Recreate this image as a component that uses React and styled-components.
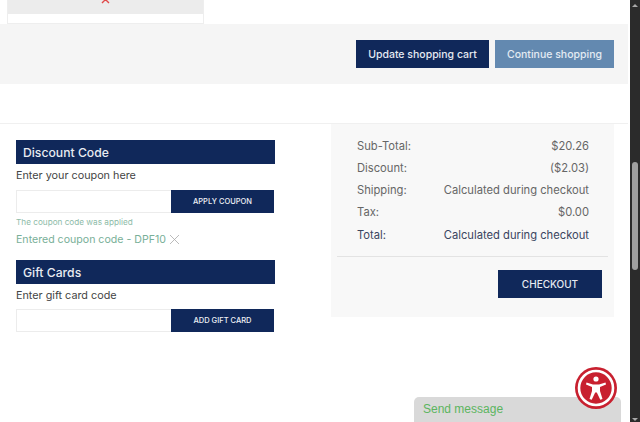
import React from 'react';
import styled, { createGlobalStyle } from 'styled-components';

const Global = createGlobalStyle`
  html, body { margin: 0; padding: 0; height: 422px; overflow: hidden; background: #fff; }
  * { box-sizing: border-box; }
  body { font-family: Inter, "Liberation Sans", sans-serif; }
`;
const navy = '#10285a';

const Page = styled.div`
  position: relative;
  display: flex;
  width: 640px;
  height: 422px;
  overflow: hidden;
`;
const Main = styled.main`
  width: 628px;
  display: flex;
  flex-direction: column;
`;
const TableStub = styled.div`
  width: 197px;
  height: 24px;
  margin-left: 7px;
  border: 1px solid #eeeeee;
  border-top: 0;
  background: #fff;
`;
const RemoveCell = styled.div`
  height: 14px;
  background: #ececec;
  display: flex;
  justify-content: center;
  align-items: flex-start;
  overflow: hidden;
`;
const CartBand = styled.div`
  height: 60px;
  background: #f5f5f5;
  display: flex;
  justify-content: flex-end;
  align-items: center;
  gap: 6px;
  padding-right: 14px;
`;
const BandButton = styled.button`
  height: 28px;
  width: ${p => p.$w}px;
  border: 0;
  padding: 0;
  background: ${p => p.$bg};
  color: ${p => p.$fg};
  font: 500 10.5px Inter, sans-serif;
`;
const Gap = styled.div`
  height: 40px;
  border-bottom: 1px solid #f0f0f0;
`;
const Columns = styled.div`
  display: flex;
  align-items: flex-start;
`;
const Left = styled.div`
  width: 331px;
  padding: 16.4px 0 0 16px;
  display: flex;
  flex-direction: column;
`;
const Heading = styled.h2`
  width: 259px;
  height: 24px;
  margin: 0;
  padding-left: 7px;
  background: ${navy};
  color: #e9ecf2;
  font: 500 12.2px/25px Inter, sans-serif;
`;
const Hint = styled.p`
  margin: 0;
  height: 25.6px;
  font: 400 10.8px/23px Inter, sans-serif;
  color: #444444;
`;
const InputRow = styled.div`
  display: flex;
  width: 258px;
  height: 23px;
`;
const CodeInput = styled.input`
  width: 155px;
  height: 23px;
  border: 1px solid #ececec;
  border-right: 0;
  background: #fff;
  outline: none;
`;
const RowButton = styled.button`
  width: 103px;
  height: 23px;
  border: 0;
  padding: 0;
  background: ${navy};
  color: #eef0f5;
  font: 500 7.5px Inter, sans-serif;
`;
const Applied = styled.div`
  margin-top: 4px;
  height: 11px;
  font: 400 8.2px/11px Inter, sans-serif;
  color: #8dbba8;
`;
const Entered = styled.div`
  margin-top: 4px;
  height: 15px;
  margin-bottom: 12.8px;
  display: flex;
  align-items: center;
  gap: 3px;
  font: 400 10.6px/15px Inter, sans-serif;
  color: #79af98;
`;
const Panel = styled.aside`
  width: 283px;
  height: 193px;
  background: #f8f8f8;
  padding: 10.5px 6px 0;
  display: flex;
  flex-direction: column;
`;
const Rows = styled.div`
  display: flex;
  flex-direction: column;
  padding: 0 19px 0 20px;
  height: 121.5px;
`;
const Row = styled.div`
  display: flex;
  justify-content: space-between;
  height: 22.3px;
  font: 400 11.2px/22px Inter, sans-serif;
  color: ${p => (p.$total ? '#3a4560' : '#666666')};
`;
const Divider = styled.hr`
  width: 271px;
  margin: 0;
  border: 0;
  border-top: 1px solid #e3e3e3;
`;
const CheckoutRow = styled.div`
  display: flex;
  justify-content: flex-end;
  padding: 13px 6px 0 0;
`;
const Checkout = styled.button`
  width: 104px;
  height: 28px;
  border: 0;
  padding: 0;
  background: ${navy};
  color: #e6eaf2;
  font: 500 10px Inter, sans-serif;
`;
const Scrollbar = styled.div`
  margin-left: 2px;
  width: 10px;
  height: 422px;
  background: #2b2b2b;
  display: flex;
  flex-direction: column;
  align-items: center;
`;
const Arrow = styled.div`
  width: 0;
  height: 0;
  margin-top: ${p => p.$mt}px;
  border-left: 3px solid transparent;
  border-right: 3px solid transparent;
  border-bottom: ${p => (p.$down ? '0' : '3px solid #a8a8a8')};
  border-top: ${p => (p.$down ? '3px solid #a8a8a8' : '0')};
`;
const Thumb = styled.div`
  width: 6px;
  height: 108px;
  margin-top: 155px;
  border-radius: 3px;
  background: #9f9f9f;
`;
const Chat = styled.div`
  position: absolute;
  left: 414px;
  top: 397px;
  width: 207px;
  height: 25px;
  padding-left: 9px;
  background: #d9d9d9;
  border-radius: 5px 5px 0 0;
  color: #5cb560;
  font: 400 12px/24px "Liberation Sans", Arial, sans-serif;
`;
const A11y = styled.svg`
  position: absolute;
  left: 575px;
  top: 367px;
  width: 42px;
  height: 42px;
`;

const Summary = [
  ['Sub-Total:', '$20.26'],
  ['Discount:', '($2.03)'],
  ['Shipping:', 'Calculated during checkout'],
  ['Tax:', '$0.00'],
];

export default function App() {
  return (
    <Page>
      <Global />
      <Main>
        <TableStub>
          <RemoveCell>
            <svg width="9" height="9" viewBox="0 0 9 9" style={{ marginTop: -5 }}>
              <path d="M1 1 L8 8 M8 1 L1 8" stroke="#e04a4a" strokeWidth="1.4" fill="none" />
            </svg>
          </RemoveCell>
        </TableStub>
        <CartBand>
          <BandButton $w={133} $bg={navy} $fg="#e6eaf2">Update shopping cart</BandButton>
          <BandButton $w={119} $bg="#6389b0" $fg="#e4ebf3">Continue shopping</BandButton>
        </CartBand>
        <Gap />
        <Columns>
          <Left>
            <Heading>Discount Code</Heading>
            <Hint>Enter your coupon here</Hint>
            <InputRow>
              <CodeInput />
              <RowButton>APPLY COUPON</RowButton>
            </InputRow>
            <Applied>The coupon code was applied</Applied>
            <Entered>
              Entered coupon code - DPF10
              <svg width="11" height="11" viewBox="0 0 11 11">
                <path d="M1 1 L10 10 M10 1 L1 10" stroke="#a9a9a9" strokeWidth="0.8" fill="none" />
              </svg>
            </Entered>
            <Heading>Gift Cards</Heading>
            <Hint>Enter gift card code</Hint>
            <InputRow>
              <CodeInput />
              <RowButton>ADD GIFT CARD</RowButton>
            </InputRow>
          </Left>
          <Panel>
            <Rows>
              {Summary.map(([k, v]) => (
                <Row key={k}><span>{k}</span><span>{v}</span></Row>
              ))}
              <Row $total><span>Total:</span><span>Calculated during checkout</span></Row>
            </Rows>
            <Divider />
            <CheckoutRow>
              <Checkout>CHECKOUT</Checkout>
            </CheckoutRow>
          </Panel>
        </Columns>
      </Main>
      <Scrollbar>
        <Arrow $mt={4} />
        <Thumb />
        <Arrow $mt={148} $down />
      </Scrollbar>
      <Chat>Send message</Chat>
      <A11y viewBox="0 0 42 42">
        <circle cx="21" cy="21" r="21" fill="#c8202f" />
        <circle cx="21" cy="21" r="17" fill="none" stroke="#fff" strokeWidth="2.6" />
        <circle cx="21" cy="12" r="2.6" fill="#fff" />
        <path d="M11.5 15.5 L18 17.5 L24 17.5 L30.5 15.5 L31 17.5 L25 20 L25 24 L27.5 32 L25.3 32.8 L21.8 25.5 L20.2 25.5 L16.7 32.8 L14.5 32 L17 24 L17 20 L11 17.5 Z" fill="#fff" />
      </A11y>
    </Page>
  );
}
